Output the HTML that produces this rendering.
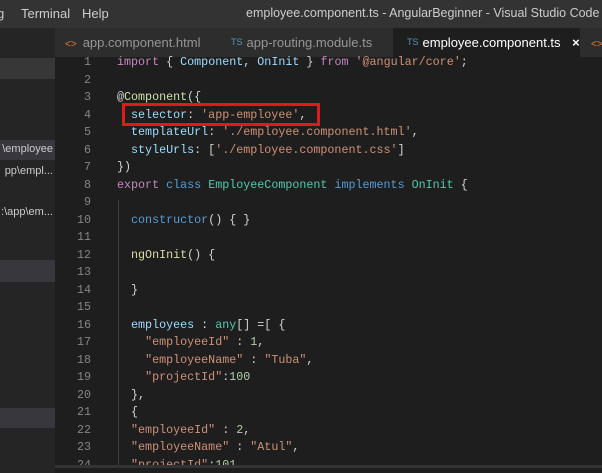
<!DOCTYPE html>
<html><head><meta charset="utf-8"><style>
*{margin:0;padding:0;box-sizing:border-box}
body{width:602px;height:473px;overflow:hidden;background:#1e1e1e;position:relative;font-family:"Liberation Sans",sans-serif}
.menu{position:absolute;left:0;top:0;width:602px;height:28px;background:#333333;color:#cccccc;font-size:13px}
.menu span{position:absolute;top:6px;white-space:nowrap}
.side{position:absolute;left:0;top:28px;width:55px;height:445px;background:#252526;color:#cccccc;font-size:11px;overflow:hidden}
.side .r{position:absolute;left:0;width:55px;white-space:nowrap;text-align:right;padding-right:2px}
.tabs{position:absolute;left:55px;top:28px;width:547px;height:29px;background:#2d2d2d;font-size:13px;color:#969696}
.tab{position:absolute;top:0;height:29px;padding-top:7px;white-space:nowrap}
.ts{color:#519aba;font-size:9px;vertical-align:2px;margin-right:4px}
.ht{color:#e37933;font-size:10px;margin-right:6px}
.code{position:absolute;left:55px;top:56px;width:547px;height:409px;font-family:"Liberation Mono",monospace;font-size:11.7px;overflow:hidden}
.ln{position:absolute;left:0;width:36px;text-align:right;color:#858585}
.tx{position:absolute;left:62px;white-space:pre;color:#d4d4d4}
.k{color:#c586c0}.b{color:#569cd6}.t{color:#4ec9b0}.s{color:#ce9178}.v{color:#9cdcfe}.f{color:#dcdcaa}.n{color:#b5cea8}
.box{position:absolute;left:122px;top:103px;width:198px;height:23px;border:3px solid #e01a1a}
.bot{position:absolute;left:55px;top:465px;width:547px;height:3px;background:#333}
.guide{position:absolute;left:118px;top:200px;width:1px;height:265px;background:#404040}
</style></head><body>
<div class="menu"><span style="left:-3px">g</span><span style="left:21px">Terminal</span><span style="left:82px">Help</span><span style="left:246px;font-size:12.5px">employee.component.ts - AngularBeginner - Visual Studio Code</span></div>
<div class="side">
<div style="position:absolute;left:0;top:30px;width:55px;height:21px;background:#373737"></div>
<div class="r" style="top:112px;height:20px;background:#37373d;padding-top:3px">\employee</div>
<div class="r" style="top:137px">pp\empl...</div>
<div class="r" style="top:178px">:\app\em...</div>
<div style="position:absolute;left:0;top:232px;width:55px;height:22px;background:#37373d"></div>
<div style="position:absolute;left:0;top:380px;width:55px;height:20px;background:#37373d"></div>
</div>
<div class="tabs">
<div class="tab" style="left:10px"><span class="ht">&lt;&gt;</span>app.component.html</div>
<div class="tab" style="left:176px"><span class="ts">TS</span>app-routing.module.ts</div>
<div class="tab" style="left:338px;width:187px;background:#1e1e1e;color:#fff;padding-left:14px"><span class="ts">TS</span>employee.component.ts <span style="margin-left:8px;font-weight:bold">×</span></div>
<div class="tab" style="left:536px"><span class="ht">&lt;&gt;</span></div>
</div>
<div class="code" id="c"></div>
<div class="guide"></div>
<div class="box"></div>
<div class="bot"></div>
<script>
var L=[
'<span class="k">import</span> { <span class="v">Component</span>, <span class="v">OnInit</span> } <span class="k">from</span> <span class="s">\'@angular/core\'</span>;',
'',
'@<span class="f">Component</span>({',
'  <span class="v">selector</span>: <span class="s">\'app-employee\'</span>,',
'  <span class="v">templateUrl</span>: <span class="s">\'./employee.component.html\'</span>,',
'  <span class="v">styleUrls</span>: [<span class="s">\'./employee.component.css\'</span>]',
'})',
'<span class="k">export</span> <span class="b">class</span> <span class="t">EmployeeComponent</span> <span class="b">implements</span> <span class="t">OnInit</span> {',
'',
'  <span class="b">constructor</span>() { }',
'',
'  <span class="f">ngOnInit</span>() {',
'',
'  }',
'',
'  <span class="v">employees</span> : <span class="t">any</span>[] =[ {',
'    <span class="s">"employeeId"</span> : <span class="n">1</span>,',
'    <span class="s">"employeeName"</span> : <span class="s">"Tuba"</span>,',
'    <span class="s">"projectId"</span>:<span class="n">100</span>',
'  },',
'  {',
'  <span class="s">"employeeId"</span> : <span class="n">2</span>,',
'  <span class="s">"employeeName"</span> : <span class="s">"Atul"</span>,',
'  <span class="s">"projectId"</span>:<span class="n">101</span>'];
var h='';for(var i=0;i<L.length;i++){var y=-1+i*17.5;h+='<div class="ln" style="top:'+y+'px">'+(i+1)+'</div><div class="tx" style="top:'+y+'px">'+L[i]+'</div>';}
document.getElementById('c').innerHTML=h;
</script>
</body></html>
